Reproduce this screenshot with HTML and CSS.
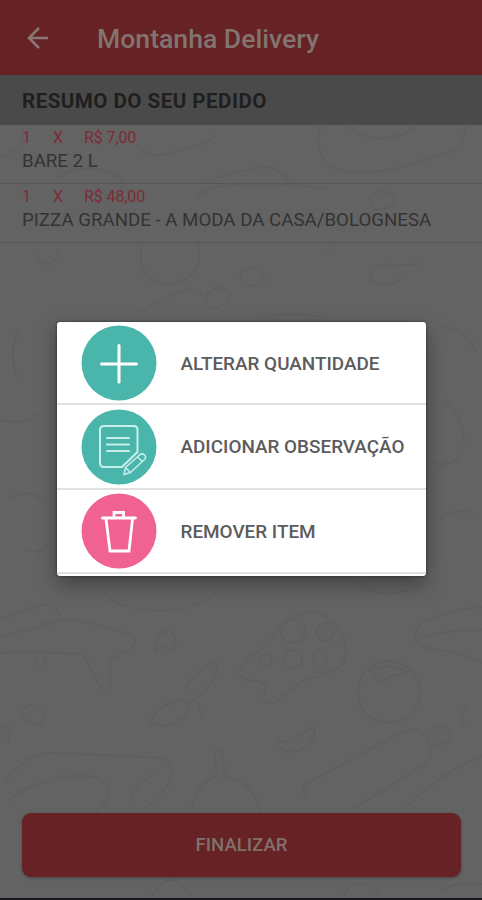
FILE: index.html
```html
<!DOCTYPE html>
<html lang="pt-BR">
<head>
    <meta charset="UTF-8">
    <meta name="viewport" content="width=device-width, initial-scale=1.0">
    <title>Montanha Delivery</title>
    <link rel="stylesheet" href="styles.css">
</head>
<body>
    <div class="app">
        <!-- Food doodles behind the page -->
        <svg class="doodles" viewBox="0 0 482 900">
            <path d="M0 157c12-4 20-10 24-18M138 145c6 12 20 12 32 8 14-4 38-8 46-18"/>
            <path d="M320 126c-4 18-2 32 14 42 20 8 56 4 76-4 22-6 48-12 52-22l4-16M350 126c8 10 22 14 36 12s24-6 28-12"/>
            <path d="M204 183c22-8 44-14 62-16 14 2 20 10 24 16M196 200c4-10 20-14 36-15 34-2 70 0 96 4M370 205c0-8 4-12 10-14 12 0 16 8 12 14-8 6-16 6-22 0zM60 178c10-10 28-12 48-6 8 2 14 6 15 10"/>
            <path d="M141 244v16c0 14 10 24 26 24s30-10 32-24v-16M331 244c0 6-4 8-7 6M37 252c2 10 4 14 12 12 8-4 10-10 8-16M240 276c2-8 10-10 16-6 6 2 10 8 8 14-8 4-20 2-24-8z"/>
            <path d="M370 280c0-12 10-18 22-14l26-2M370 280c8 8 24 6 32-2M140 313c14-10 28-16 42-22 12-4 20 0 24 12 4 6 10 8 16 2 10 0 10-14 2-16-8-4-16 2-18 10M260 318c20-6 42-4 64-1"/>
            <path d="M18 331c-8 20-6 34 0 48M442 326c20 4 30 14 34 26M446 400c10 12 18 26 18 42M432 462c10 4 20 2 28-6M0 420c12 4 26 2 38-6M8 500c10-8 24-10 34 0M440 520c10-10 26-12 38-4M24 548c10 6 20 4 26-4"/>
            <path d="M100 588c10 18 42 24 72 22 24-2 38-10 46-22M358 580c4 12 24 16 42 12 12-2 20-6 22-12"/>
            <path d="M0 619c14-4 28-10 42-14 14-2 20 8 16 16l-20 6-38 10M0 653c26-2 54 0 82 1 10 10 12 30 24 38 8-6 2-26 5-33l12-6c10-4 16-12 10-18-16-4-28-10-46-12-18-6-32-4-46 2M34 654c2 10 6 14 8 14s2-10 6-14M155 650c0-12 8-22 16-18 6 6 6 16-2 18-4-6-8-6-14 0z"/>
            <path d="M186 690c4-12 16-24 30-28 4 12-6 28-22 36l-8 12M150 722c6-12 18-20 34-22 8 4 4 14-2 18-10 8-22 10-32 4zM198 702l4 16"/>
            <path d="M240 670c4-12 22-20 30-30 8-14 24-26 38-28 24 0 38 22 38 42-2 14-14 18-26 22-12 4-20 4-26 12-12 6-16 18-28 14-6-4 2-12-2-18-4-4-10-2-16-4-6-2-10-4-8-10z"/>
            <circle cx="293" cy="631" r="12"/><circle cx="293" cy="659" r="9"/><circle cx="325" cy="632" r="9"/><circle cx="320" cy="658" r="7"/><circle cx="266" cy="661" r="6"/>
            <path d="M482 607c-24 2-50 8-62 18-8 8-6 18 4 22 20 4 40 6 58 16M418 638c20-6 44-8 64-8"/>
            <circle cx="389" cy="692" r="31"/><path d="M370 670c10-4 26-6 38 2l-16 4-12 6z"/>
            <path d="M22 715c0-8 8-12 14-8 8 4 10 12 4 18l-14-2zM0 724c10 0 12 10 8 20M278 742c14 0 20-6 36-16 4 10-6 20-14 24-10 4-20 2-22-8zM468 708c-8 6-10 12-4 20M306 784l94-51c12-6 22-4 28 6 6 12 2 22-8 28l-70 44M306 784c-4 4-4 10 0 14M428 738c2-12 14-16 22-8 4 10-8 18-16 14"/>
            <path d="M4 782c12-14 24-26 40-29 44 0 84 4 118 5 8 4 12 14 8 24-8 12-18 20-28 30M8 800c20-14 40-22 60-24 16 0 30-2 38 8s-2 20-10 28M130 802c4-14 16-24 28-30M192 812c0-18 12-34 26-36l-4-24 8-2 2 26c18 2 34 18 36 36M402 812c24-26 50-44 80-56"/>
            <path d="M152 896c6-10 12-16 20-16s12 8 20 16M344 896c4-14 24-20 36 0M440 890c12-6 22-8 42-6"/>
        </svg>

        <header class="topbar">
            <svg class="back" viewBox="0 0 22 22">
                <path d="M21 11H2M12 1L2 11l10 10"/>
            </svg>
            <h1>Montanha Delivery</h1>
        </header>
        <h2 class="section-title">RESUMO DO SEU PEDIDO</h2>

        <ul class="order">
            <li>
                <div class="price"><span>1</span><span>X</span><span>R$ 7,00</span></div>
                <div class="name">BARE 2 L</div>
            </li>
            <li>
                <div class="price"><span>1</span><span>X</span><span>R$ 48,00</span></div>
                <div class="name">PIZZA GRANDE - A MODA DA CASA/BOLOGNESA</div>
            </li>
        </ul>

        <button class="finish">FINALIZAR</button>
    </div>

    <div class="dialog">
        <div class="option">
            <svg class="icon" viewBox="0 0 76 76">
                <circle class="teal" cx="38" cy="38" r="37.500"/>
                <path class="thick" d="M38 20.500v36.500M20.500 39h35"/>
            </svg>
            <span>ALTERAR QUANTIDADE</span>
        </div>
        <div class="option">
            <svg class="icon" viewBox="0 0 76 76">
                <circle class="teal" cx="38" cy="38" r="37.500"/>
                <path class="note" d="M56.500 37V21q0-4-4-4H23q-4 0-4 4v33q0 4 4 4h18l15.500-15z"/>
                <path class="lines" d="M26 29h22M26 35.500h22M26 42h22"/>
                <path class="pencil" d="M43 65.500l1.500-7 14.500-13q2.500-1.500 4.500.5t.5 4L49.500 63.500zM44.500 58.500l5 5M56.500 48l5 4.500"/>
            </svg>
            <span>ADICIONAR OBSERVAÇÃO</span>
        </div>
        <div class="option">
            <svg class="icon" viewBox="0 0 76 76">
                <circle class="pink" cx="38" cy="38" r="37.500"/>
                <path class="trash" d="M21.500 25h33M33 24v-4.500h9.500V24M25 26l4 32h19l3.500-32"/>
            </svg>
            <span>REMOVER ITEM</span>
        </div>
    </div>
</body>
</html>
```

FILE: styles.css
```css
* {
    box-sizing: border-box;
}
body {
    margin: 0;
    font-family: Roboto, sans-serif;
    background-color: #636363;
}
.app {
    position: relative;
    display: flex;
    flex-direction: column;
    height: 900px;
    padding-bottom: 21px;
    border-bottom: 2px solid #17171b;
    overflow: hidden;
}
.doodles {
    position: absolute;
    top: 0;
    left: 0;
    width: 482px;
    height: 900px;
    fill: none;
    stroke: #5f5f5f;
    stroke-width: 1.8;
}
.topbar, .section-title, .order, .finish {
    position: relative;
}
.topbar {
    display: flex;
    align-items: center;
    gap: 48px;
    height: 75px;
    padding-left: 27px;
    background-color: #662224;
}
.back {
    width: 22px;
    height: 22px;
    fill: none;
    stroke: #8a7776;
    stroke-width: 2.6;
}
h1 {
    margin: 2px 0 0;
    font-size: 26.6px;
    font-weight: 500;
    color: #82746f;
}
.section-title {
    height: 50px;
    margin: 0;
    padding-left: 22px;
    font-size: 20.6px;
    font-weight: 700;
    line-height: 52px;
    letter-spacing: 0.45px;
    color: #1f1f1f;
    background-color: #4a4a4a;
}
.order {
    margin: 0;
    padding: 0;
    list-style: none;
}
.order li {
    height: 59px;
    padding: 2px 22px 0;
    border-bottom: 1px solid #565656;
}
.price {
    display: flex;
    font-size: 16px;
    line-height: 21px;
    color: #7d2b36;
}
.price span {
    width: 31px;
    letter-spacing: -0.1px;
    white-space: nowrap;
}
.name {
    font-size: 18.7px;
    line-height: 26px;
    color: #333;
    white-space: nowrap;
}
.finish {
    height: 64px;
    margin: auto 21px 0 22px;
    border: 0;
    border-radius: 9px;
    font-family: inherit;
    font-size: 18.6px;
    font-weight: 500;
    color: #82706c;
    background-color: #662224;
    box-shadow: 0 1px 3px rgba(0, 0, 0, 0.3);
}
.dialog {
    position: absolute;
    top: 322px;
    left: 57px;
    width: 369px;
    height: 254px;
    border-radius: 3px;
    background-color: #fff;
    box-shadow: 0 0 3px rgba(0, 0, 0, 0.5), 0 8px 20px rgba(0, 0, 0, 0.35);
}
.option {
    display: flex;
    align-items: center;
    gap: 24px;
    height: 84.3px;
    padding: 1px 0 0 23.5px;
    border-bottom: 2px solid #e0e0e0;
    font-size: 18.9px;
    font-weight: 500;
    color: #5c5c5c;
    white-space: nowrap;
}
.option:first-child {
    height: 83.3px;
}
.icon {
    width: 76px;
    height: 76px;
    fill: none;
    stroke: #fff;
    stroke-width: 2;
    stroke-linecap: round;
    stroke-linejoin: round;
}
.teal {
    fill: #4ab5ab;
    stroke: none;
}
.pink {
    fill: #f06292;
    stroke: none;
}
.thick {
    stroke-width: 3;
}
.note, .lines, .pencil {
    stroke: #c8efea;
}
.pencil {
    stroke-width: 1.5;
}
.trash {
    stroke-width: 2.8;
    stroke-linejoin: miter;
}
```
